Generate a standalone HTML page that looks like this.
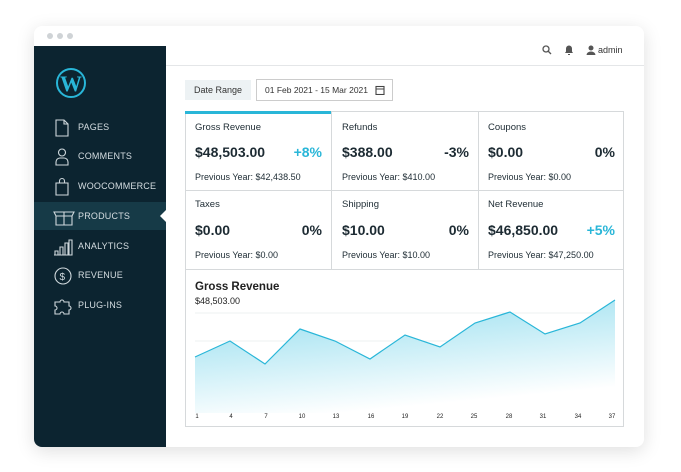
<!DOCTYPE html><html><head><style>
*{margin:0;padding:0;box-sizing:border-box}
body{width:681px;height:472px;background:#fff;font-family:"Liberation Sans",sans-serif;position:relative;overflow:hidden}
.win{position:absolute;left:34px;top:26px;width:610px;height:421px;border-radius:8px;background:#fff;box-shadow:0 4px 18px rgba(0,0,0,.13);overflow:hidden}
.dot{position:absolute;top:7px;width:6px;height:6px;border-radius:50%;background:#cfd3d6}
.side{position:absolute;left:0;top:20px;width:132px;height:401px;background:#0c2430}
.logo{position:absolute;left:22px;top:22px;width:30px;height:30px;border-radius:50%;border:2px solid #29b6d8;color:#29b6d8;font:bold 22px "Liberation Serif",serif;text-align:center;line-height:27px}
.item{position:absolute;left:0;width:132px;height:28px;color:#d5dde1;font-size:9px;letter-spacing:.2px;line-height:28px;padding-left:44px}
.item svg{position:absolute;left:19px;top:5px}
.act{background:#163a47}
.act:after{content:"";position:absolute;right:0;top:8px;border:6px solid transparent;border-right-color:#fff;border-left:0}
.top{position:absolute;left:132px;top:20px;right:0;height:20px;border-bottom:1px solid #e4e6e8}
.main{position:absolute;left:132px;top:41px;right:0;bottom:0}
</style></head><body>
<div class="win">
<div class="dot" style="left:13px"></div><div class="dot" style="left:23px"></div><div class="dot" style="left:33px"></div>
<div class="side">
<div class="logo">W</div>
<div class="item" style="top:67px"><svg width="18" height="20" fill="none" stroke="#cfd8dc" stroke-width="1.1"><path d="M3 2h8l4 4v12H3z M11 2v4h4"/></svg>PAGES</div>
<div class="item" style="top:96px"><svg width="18" height="20" fill="none" stroke="#cfd8dc" stroke-width="1.1"><circle cx="9" cy="5.5" r="3.5"/><path d="M3 18v-3a4 4 0 0 1 4-4h4a4 4 0 0 1 4 4v3z"/></svg>COMMENTS</div>
<div class="item" style="top:126px"><svg width="18" height="20" fill="none" stroke="#cfd8dc" stroke-width="1.1"><path d="M3 6h12v12H3z M6.5 6V4a2.5 2.5 0 0 1 5 0v2"/></svg>WOOCOMMERCE</div>
<div class="item act" style="top:156px"><svg width="22" height="20" fill="none" stroke="#cfd8dc" stroke-width="1.1"><path d="M1 5h20l-2 4H3z M3 9v9h16V9 M11 5v13"/></svg>PRODUCTS</div>
<div class="item" style="top:186px"><svg width="20" height="20" fill="none" stroke="#cfd8dc" stroke-width="1.1"><path d="M1 18h18 M2 14h3v4H2z M7 10h3v8H7z M12 6h3v12h-3z M16 3h3v15h-3z"/></svg>ANALYTICS</div>
<div class="item" style="top:215px"><svg width="20" height="20" fill="none" stroke="#cfd8dc" stroke-width="1.1"><circle cx="10" cy="10" r="8"/><text x="6.5" y="14" font-size="10" fill="#cfd8dc" stroke="none">$</text></svg>REVENUE</div>
<div class="item" style="top:245px"><svg width="20" height="20" fill="none" stroke="#cfd8dc" stroke-width="1.1"><path d="M2 6h5a2 2 0 1 1 4 0h5v4a2 2 0 1 1 0 4v4H11a2 2 0 1 0-4 0H2v-4a2 2 0 1 0 0-4z"/></svg>PLUG-INS</div>
</div>
<div class="top">
<svg style="position:absolute;left:376px;top:-1px" width="10" height="10" fill="none" stroke="#555" stroke-width="1.3"><circle cx="4" cy="4" r="3"/><path d="M6 6l3 3"/></svg>
<svg style="position:absolute;left:398px;top:-1px" width="10" height="10" fill="#555"><path d="M5 0.5a3 3 0 0 1 3 3v3l1 1.5H1l1-1.5v-3a3 3 0 0 1 3-3zM4 9h2v1H4z"/></svg>
<svg style="position:absolute;left:420px;top:-1px" width="10" height="10" fill="#555"><circle cx="5" cy="3" r="2.5"/><path d="M0.5 10a4.5 3.5 0 0 1 9 0z"/></svg>
<span style="position:absolute;left:432px;top:-1px;font-size:9px;color:#333">admin</span>
</div>
<div class="main">
<div style="position:absolute;left:19px;top:13px;width:66px;height:20px;background:#edf2f4;font-size:9px;color:#333;line-height:20px;text-align:center">Date Range</div>
<div style="position:absolute;left:90px;top:12px;width:137px;height:22px;border:1px solid #ccc;font-size:8.5px;color:#333;line-height:20px;padding-left:8px">01 Feb 2021 - 15 Mar 2021<svg style="position:absolute;right:7px;top:5px" width="10" height="10" fill="none" stroke="#444" stroke-width="1.1"><rect x="1" y="1.5" width="8" height="8"/><path d="M1 4h8"/></svg></div>
<div style="position:absolute;left:19px;top:44px;width:439px;height:316px;border:1px solid #d6d9db"></div>
<div style="position:absolute;left:19px;top:44px;width:147px;height:3px;background:#29b6d8"></div>
<div style="position:absolute;left:165px;top:44px;width:1px;height:158px;background:#d6d9db"></div>
<div style="position:absolute;left:312px;top:44px;width:1px;height:158px;background:#d6d9db"></div>
<div style="position:absolute;left:19px;top:123px;width:439px;height:1px;background:#d6d9db"></div>
<div style="position:absolute;left:19px;top:202px;width:439px;height:1px;background:#d6d9db"></div>
</div>
<svg style="position:absolute;left:0;top:0" width="610" height="421">
<defs><linearGradient id="g" x1="0" y1="0" x2="0.35" y2="1"><stop offset="0" stop-color="#8fdcee"/><stop offset="1" stop-color="#fff"/></linearGradient></defs>
<g transform="translate(-34,-26)" font-family="Liberation Sans,sans-serif">
<g fill="#1d2b33">
<text x="195" y="130" font-size="9.5">Gross Revenue</text><text x="195" y="157" font-size="14" font-weight="bold">$48,503.00</text><text x="322" y="157" font-size="14" font-weight="bold" fill="#29b6d8" text-anchor="end">+8%</text><text x="195" y="180" font-size="9">Previous Year: $42,438.50</text>
<text x="342" y="130" font-size="9.5">Refunds</text><text x="342" y="157" font-size="14" font-weight="bold">$388.00</text><text x="469" y="157" font-size="14" font-weight="bold" text-anchor="end">-3%</text><text x="342" y="180" font-size="9">Previous Year: $410.00</text>
<text x="488" y="130" font-size="9.5">Coupons</text><text x="488" y="157" font-size="14" font-weight="bold">$0.00</text><text x="615" y="157" font-size="14" font-weight="bold" text-anchor="end">0%</text><text x="488" y="180" font-size="9">Previous Year: $0.00</text>
<text x="195" y="207" font-size="9.5">Taxes</text><text x="195" y="235" font-size="14" font-weight="bold">$0.00</text><text x="322" y="235" font-size="14" font-weight="bold" text-anchor="end">0%</text><text x="195" y="258" font-size="9">Previous Year: $0.00</text>
<text x="342" y="207" font-size="9.5">Shipping</text><text x="342" y="235" font-size="14" font-weight="bold">$10.00</text><text x="469" y="235" font-size="14" font-weight="bold" text-anchor="end">0%</text><text x="342" y="258" font-size="9">Previous Year: $10.00</text>
<text x="488" y="207" font-size="9.5">Net Revenue</text><text x="488" y="235" font-size="14" font-weight="bold">$46,850.00</text><text x="615" y="235" font-size="14" font-weight="bold" fill="#29b6d8" text-anchor="end">+5%</text><text x="488" y="258" font-size="9">Previous Year: $47,250.00</text>
<text x="195" y="290" font-size="11.5" font-weight="bold" fill="#222">Gross Revenue</text><text x="195" y="304" font-size="9" fill="#222">$48,503.00</text>
</g>
<g stroke="#eef0f2"><path d="M195 313H613M195 341H613M195 369H613M195 397H613"/></g>
<path d="M195 357L230 341L265 364L300 329L335 341L370 359L405 335L440 347L475 323L510 312L545 334L580 323L615 300V413H195Z" fill="url(#g)"/>
<path d="M195 357L230 341L265 364L300 329L335 341L370 359L405 335L440 347L475 323L510 312L545 334L580 323L615 300" fill="none" stroke="#29b6d8" stroke-width="1.2"/>
<g font-size="6" fill="#222" text-anchor="middle"><text x="197" y="418">1</text><text x="231" y="418">4</text><text x="266" y="418">7</text><text x="302" y="418">10</text><text x="336" y="418">13</text><text x="371" y="418">16</text><text x="405" y="418">19</text><text x="440" y="418">22</text><text x="474" y="418">25</text><text x="509" y="418">28</text><text x="543" y="418">31</text><text x="578" y="418">34</text><text x="612" y="418">37</text></g>
</g></svg>
</div>
</body></html>
